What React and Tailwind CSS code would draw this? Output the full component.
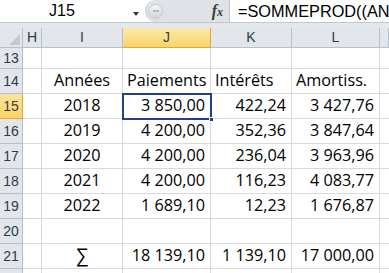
const cols = ['H', 'I', 'J', 'K', 'L', ''];

const rows = [
  { n: 13, h: 'h-[21px]', cells: ['', '', '', '', ''] },
  { n: 14, h: 'h-[25px]', head: true, cells: ['', 'Années', 'Paiements', 'Intérêts', 'Amortiss.'] },
  { n: 15, h: 'h-[25px]', cells: ['', '2018', '3 850,00', '422,24', '3 427,76'] },
  { n: 16, h: 'h-[25px]', cells: ['', '2019', '4 200,00', '352,36', '3 847,64'] },
  { n: 17, h: 'h-[25px]', cells: ['', '2020', '4 200,00', '236,04', '3 963,96'] },
  { n: 18, h: 'h-[25px]', cells: ['', '2021', '4 200,00', '116,23', '4 083,77'] },
  { n: 19, h: 'h-[25px]', cells: ['', '2022', '1 689,10', '12,23', '1 676,87'] },
  { n: 20, h: 'h-[25px]', cells: ['', '', '', '', ''] },
  { n: 21, h: 'h-[25px]', cells: ['', '∑', '18 139,10', '1 139,10', '17 000,00'] },
  { n: '', h: 'h-[25px]', cells: ['', '', '', '', ''] },
];

const FormulaBar = () => (
  <div className="flex h-[23px] bg-white border-b border-[#c3c7cd] font-['Liberation_Sans',sans-serif]">
    <div className="relative w-[145px] flex items-center">
      <span className="ml-[49px] text-[16px] leading-none text-black">J15</span>
      <span className="absolute left-[133px] top-[12px] w-0 h-0 border-l-[3px] border-r-[3px] border-t-[4px] border-l-transparent border-r-transparent border-t-[#333]" />
    </div>
    <div className="w-[84px] flex items-center bg-[#dfe2e6] rounded-l-[12px] border-l border-[#c9cdd2]">
      <div className="ml-[2px] w-[15px] h-[15px] rounded-full bg-gradient-to-b from-[#f4f5f7] to-[#d0d4da] border border-[#c6cad0] flex items-center justify-center">
        <div className="w-[6px] h-[2px] bg-[#b5bac1]" />
      </div>
      <span className="ml-auto mr-[6px] font-['Liberation_Serif',serif] italic font-bold text-[16px] leading-none text-[#3a3a3a]">
        f<span className="text-[12px]">x</span>
      </span>
    </div>
    <div className="flex-1 flex items-center border-l border-[#c3c7cd] overflow-hidden whitespace-nowrap">
      <span className="ml-[8px] text-[16.3px] leading-none text-black">=SOMMEPROD((ANN</span>
    </div>
  </div>
);

const App = () => {
  return (
    <div className="w-[389px] h-[273px] overflow-hidden bg-white">
      <FormulaBar />
      <div className="h-[5px] bg-[#e4e7eb]" />
      <div className="relative grid grid-cols-[23px_19px_81px_88px_81px_88px_1fr]">
        {/* column headers */}
        <div className="relative h-[20px] bg-[#e2e6eb] border-r border-b border-[#b8bfc8]">
          <div className="absolute right-[2px] bottom-[2px] w-0 h-0 border-l-[11px] border-t-[11px] border-l-transparent border-t-transparent border-b-0 border-r-[11px] border-r-[#c6cad0]" />
        </div>
        {cols.map((c, i) => (
          <div
            key={i}
            className={
              c === 'J'
                ? 'h-[20px] flex items-center justify-center bg-gradient-to-b from-[#fde9a4] to-[#f8d36a] border-r border-b border-[#dba64a] text-[14px] text-[#3d3d3d] font-["Liberation_Sans",sans-serif]'
                : 'h-[20px] flex items-center justify-center bg-[#e2e6eb] border-r border-b border-[#b8bfc8] text-[14px] text-[#2b3a4f] font-["Liberation_Sans",sans-serif]'
            }
          >
            {c}
          </div>
        ))}
        {/* body */}
        {rows.map((r, ri) => (
          <div key={ri} className="contents">
            <div
              className={
                r.n === 15
                  ? `${r.h} flex items-center justify-center bg-gradient-to-b from-[#fde49a] to-[#f9d466] border-r border-b border-[#dba64a] text-[14px] text-[#3d3d3d] font-["Liberation_Sans",sans-serif]`
                  : `${r.h} flex items-center justify-center bg-[#e2e6eb] border-r border-b border-[#b8bfc8] text-[14px] text-[#2b3a4f] font-["Liberation_Sans",sans-serif]`
              }
            >
              {r.n}
            </div>
            {r.cells.map((v, i) => (
              <div
                key={i}
                className={`${r.h} flex items-end pb-[3px] border-r border-b border-[#d9d9d9] font-['Open_Sans',sans-serif] text-[16.2px] leading-[20px] text-black whitespace-nowrap overflow-visible ${
                  i === 1 ? 'justify-center' : r.head ? 'justify-start pl-[4px]' : 'justify-end pr-[5px]'
                } ${v === '∑' ? "font-['DejaVu_Sans',sans-serif] text-[19px] pb-[1px]" : ''}`}
              >
                {v}
              </div>
            ))}
            <div className={`${r.h} border-b border-[#d9d9d9]`} />
          </div>
        ))}
        {/* active cell J15 */}
        <div className="absolute left-[122px] top-[65px] w-[90px] h-[27px] border-2 border-[#24417f] pointer-events-none">
          <div className="absolute inset-0 border border-white" />
          <div className="absolute right-[-4px] bottom-[-4px] w-[5px] h-[5px] bg-[#24417f] border border-white" />
        </div>
      </div>
    </div>
  );
};

export default App;
